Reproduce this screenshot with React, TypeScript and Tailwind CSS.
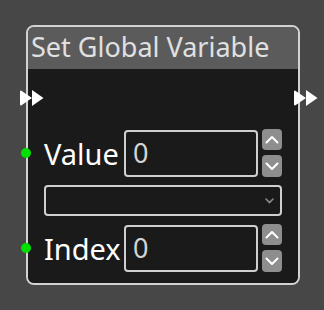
import React from "react";

const FlowArrows = () => (
  <svg width="24" height="18" viewBox="0 0 24 18" fill="#ffffff">
    <path d="M1 1.5 Q0 1 0 3 L0 15 Q0 17 1.5 16.2 L12 9 Z" />
    <path d="M12 1 L23.5 9 L12 17 Z" />
  </svg>
);

const Chevron = ({ up }: { up?: boolean }) => (
  <svg width="14" height="9" viewBox="0 0 14 9" fill="none">
    <path
      d={up ? "M1.5 7.5 L7 2 L12.5 7.5" : "M1.5 1.5 L7 7 L12.5 1.5"}
      stroke="#ffffff"
      strokeWidth="2"
      strokeLinecap="round"
      strokeLinejoin="round"
    />
  </svg>
);

const NumberRow = ({ label }: { label: string }) => (
  <div className="relative flex items-center h-[48px]">
    <span className="absolute left-[-7px] w-[10px] h-[10px] rounded-full bg-[#00e000]" />
    <span className="w-[96px] shrink-0 pl-[16px] text-[29px] leading-none text-white">
      {label}
    </span>
    <div className="flex items-center shrink-0 w-[134px] h-[47px] border-2 border-[#cfcfcf] rounded-[4px] pl-[7px] text-[27px] text-[#d4d4d4]">
      0
    </div>
    <div className="ml-[4px] flex flex-col gap-[5px]">
      <button className="flex items-center justify-center w-[20px] h-[21px] rounded-[4px] bg-[#8e8e8e]">
        <Chevron up />
      </button>
      <button className="flex items-center justify-center w-[20px] h-[22px] rounded-[4px] bg-[#8e8e8e]">
        <Chevron />
      </button>
    </div>
  </div>
);

export default function App() {
  return (
    <div className="w-[324px] h-[310px] bg-[#474747] pt-[25px] pl-[26px] font-['Noto_Sans',sans-serif]">
      <div className="relative w-[274px] border-2 border-[#d2d2d2] rounded-[8px] overflow-visible">
        <div className="h-[42px] bg-[#5b5b5b] rounded-t-[6px] pl-[3px] pt-[2px] text-[27px] leading-[36px] text-[#e0e0e0] whitespace-nowrap">
          Set Global Variable
        </div>
        <div className="bg-[#1a1a1a] rounded-b-[6px] pt-[19px] pb-[11px] pr-[16px]">
          <div className="relative h-[20px]">
            <span className="absolute left-[-8px] top-[1px]">
              <FlowArrows />
            </span>
            <span className="absolute right-[-36px] top-[1px]">
              <FlowArrows />
            </span>
          </div>
          <div className="mt-[21px]">
            <NumberRow label="Value" />
          </div>
          <div className="mt-[8px] ml-[16px] relative h-[31px] border-2 border-[#cfcfcf] rounded-[4px]">
            <svg
              className="absolute right-[6px] top-[11px]"
              width="9"
              height="6"
              viewBox="0 0 9 6"
              fill="none"
            >
              <path
                d="M1 1 L4.5 4.5 L8 1"
                stroke="#8a8a8a"
                strokeWidth="1.6"
                strokeLinecap="round"
              />
            </svg>
          </div>
          <div className="mt-[8px]">
            <NumberRow label="Index" />
          </div>
        </div>
      </div>
    </div>
  );
}
